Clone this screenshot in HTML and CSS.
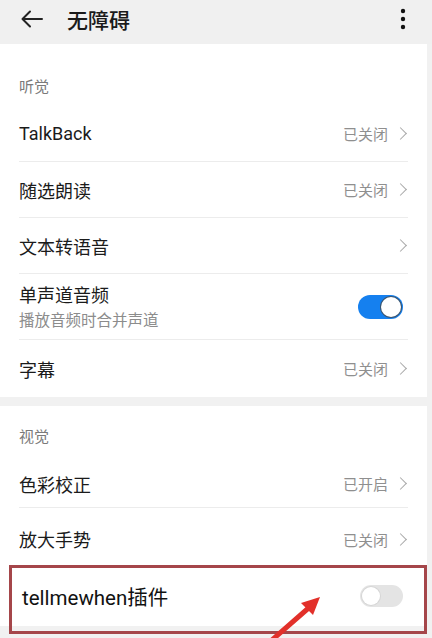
FILE: index.html
```html
<!DOCTYPE html>
<html lang="zh">
<head>
<meta charset="utf-8">
<link rel="stylesheet" href="styles.css">
</head>
<body>
<div class="screen">
  <header class="topbar">
    <svg class="back" width="24" height="20" viewBox="0 0 24 20"><path d="M22 10H3M10 2.5L2.5 10L10 17.5" fill="none" stroke="#222" stroke-width="2" stroke-linecap="round" stroke-linejoin="round"/></svg>
    <h1 class="title">无障碍</h1>
    <svg class="more" width="6" height="22" viewBox="0 0 6 22"><circle cx="3" cy="3" r="2.2" fill="#111"/><circle cx="3" cy="11" r="2.2" fill="#111"/><circle cx="3" cy="19" r="2.2" fill="#111"/></svg>
  </header>

  <section class="card card-first">
    <div class="sec-title">听觉</div>
    <div class="row"><span class="label">TalkBack</span><span class="value">已关闭<i class="chev"></i></span></div>
    <div class="row"><span class="label">随选朗读</span><span class="value">已关闭<i class="chev"></i></span></div>
    <div class="row"><span class="label">文本转语音</span><span class="value"><i class="chev"></i></span></div>
    <div class="row row-tall">
      <div class="stack"><span class="label">单声道音频</span><span class="sub">播放音频时合并声道</span></div>
      <span class="switch on"><span class="knob"></span></span>
    </div>
    <div class="row last"><span class="label">字幕</span><span class="value">已关闭<i class="chev"></i></span></div>
  </section>

  <section class="card card-second">
    <div class="sec-title">视觉</div>
    <div class="row row-first"><span class="label">色彩校正</span><span class="value">已开启<i class="chev"></i></span></div>
    <div class="row row-plain"><span class="label">放大手势</span><span class="value">已关闭<i class="chev"></i></span></div>
    <div class="row row-plugin"><span class="label plugin-label">tellmewhen插件</span><span class="switch off"><span class="knob"></span></span></div>
  </section>

  <div class="highlight"></div>
  <svg class="arrow" width="80" height="60" viewBox="0 0 80 60">
    <path d="M18 62L58 27" stroke="#e2302a" stroke-width="5" stroke-linecap="round"/>
    <path d="M66 19L47 25L59 37Z" fill="#e2302a"/>
  </svg>
</div>
</body>
</html>
```

FILE: styles.css
```css
* { box-sizing: border-box; margin: 0; padding: 0; }
html, body { width: 432px; height: 638px; overflow: hidden; }
body {
  background: #f1f1f1;
  font-family: Roboto, "Noto Sans CJK SC", sans-serif;
  color: #1b1b1b;
}
.screen { position: relative; height: 638px; overflow: hidden; }

.topbar {
  height: 44px;
  display: flex;
  align-items: center;
  padding-left: 20px;
  padding-right: 26px;
  padding-bottom: 7px;
  background: #f0f0f0;
}
.back { flex: none; }
.title {
  font-family: "Noto Sans CJK SC", sans-serif;
  font-size: 21px;
  font-weight: 500;
  line-height: 28px;
  margin-left: 23px;
  flex: 1;
  color: #1a1a1a;
}
.more { flex: none; }

.card {
  background: #fff;
  margin-right: 5px;
}
.card-first { padding-top: 32px; }
.card-second { margin-top: 9px; padding-top: 20px; }

.sec-title {
  font-family: "Noto Sans CJK SC", sans-serif;
  font-size: 15px;
  line-height: 20px;
  color: #7a7a7a;
  padding-left: 19px;
  margin-bottom: 10px;
}

.row {
  height: 56px;
  margin: 0 19px;
  border-bottom: 1px solid #ececec;
  display: flex;
  align-items: center;
  justify-content: space-between;
}
.row.last { border-bottom: none; height: 57px; }
.row-tall { height: 66px; }
.row-first { height: 52px; padding-top: 4px; }
.row-plain { border-bottom: none; height: 58px; padding-top: 4px; }
.row-plugin { border-bottom: none; height: 60px; margin-left: 22px; }

.label {
  font-size: 18px;
  color: #1b1b1b;
}
.plugin-label { font-size: 20.5px; color: #111; }
.stack { display: flex; flex-direction: column; }
.stack .label { line-height: 24px; }
.sub {
  font-family: "Noto Sans CJK SC", sans-serif;
  font-size: 15.5px;
  line-height: 22px;
  color: #8c8c8c;
}
.value {
  display: flex;
  align-items: center;
  font-family: "Noto Sans CJK SC", sans-serif;
  font-size: 15px;
  color: #8f8f8f;
}
.chev {
  display: inline-block;
  width: 9px;
  height: 9px;
  border-top: 1.5px solid #a8a8a8;
  border-right: 1.5px solid #a8a8a8;
  transform: rotate(45deg);
  margin-left: 8px;
  margin-right: 3px;
}

.switch {
  width: 45px;
  height: 24px;
  border-radius: 12px;
  display: flex;
  align-items: center;
  padding: 2px;
}
.switch .knob {
  width: 20px;
  height: 20px;
  border-radius: 50%;
  background: #fff;
}
.switch.on { background: #1580ef; justify-content: flex-end; margin-right: 5px; }
.switch.on .knob { box-shadow: 0 0 0 1px #3a5570; }
.switch.off { background: #e4e4e4; justify-content: flex-start; width: 43px; height: 22px; margin-right: 5px; }
.switch.off .knob { width: 18px; height: 18px; box-shadow: 0 0 0 1px #d6d6d6; }

.highlight {
  position: absolute;
  left: 9px;
  top: 565px;
  width: 418px;
  height: 69px;
  border: 3px solid #a5464a;
}
.arrow {
  position: absolute;
  left: 254px;
  top: 578px;
}
```
